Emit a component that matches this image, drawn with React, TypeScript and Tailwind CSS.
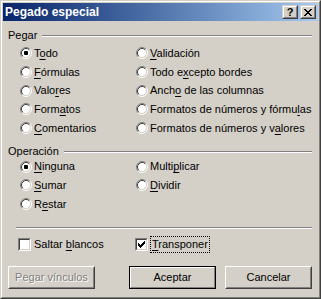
import * as React from 'react';

type Item = { text: string; at: number; checked?: boolean };

const Acc = ({ text, at }: { text: string; at: number }) => (
  <span className="whitespace-nowrap">
    {text.slice(0, at)}
    <span className="underline underline-offset-[2px]">{text[at]}</span>
    {text.slice(at + 1)}
  </span>
);

const Radio = ({ checked }: { checked?: boolean }) => (
  <svg width="12" height="12" viewBox="0 0 12 12" className="shrink-0">
    <circle cx="6" cy="6" r="4.5" fill="#fff" />
    <path d="M2.11 9.89A5.5 5.5 0 0 1 9.89 2.11" stroke="#808080" fill="none" />
    <path d="M9.89 2.11A5.5 5.5 0 0 1 2.11 9.89" stroke="#fff" fill="none" />
    <path d="M2.82 9.18A4.5 4.5 0 0 1 9.18 2.82" stroke="#404040" fill="none" />
    <path d="M9.18 2.82A4.5 4.5 0 0 1 2.82 9.18" stroke="#D4D0C8" fill="none" />
    {checked && <rect x="4" y="4" width="4" height="4" rx="1" fill="#000" />}
  </svg>
);

const Checkbox = ({ checked }: { checked?: boolean }) => (
  <div className="w-[13px] h-[13px] shrink-0 border border-t-[#808080] border-l-[#808080] border-r-white border-b-white">
    <div className="w-full h-full bg-white border border-t-[#404040] border-l-[#404040] border-r-[#D4D0C8] border-b-[#D4D0C8]">
      {checked && (
        <svg width="9" height="9" viewBox="0 0 9 9" className="block">
          <rect x="1" y="3" width="1" height="3" fill="#000" />
          <rect x="2" y="4" width="1" height="3" fill="#000" />
          <rect x="3" y="5" width="1" height="3" fill="#000" />
          <rect x="4" y="4" width="1" height="3" fill="#000" />
          <rect x="5" y="3" width="1" height="3" fill="#000" />
          <rect x="6" y="2" width="1" height="3" fill="#000" />
          <rect x="7" y="1" width="1" height="3" fill="#000" />
        </svg>
      )}
    </div>
  </div>
);

const RadioCol = ({ items, width }: { items: Item[]; width?: string }) => (
  <div className={`flex flex-col ${width ?? ''}`}>
    {items.map((it) => (
      <div key={it.text} className="flex h-[18.7px] items-center gap-[2px]">
        <Radio checked={it.checked} />
        <Acc text={it.text} at={it.at} />
      </div>
    ))}
  </div>
);

const GroupLabel = ({ text }: { text: string }) => (
  <div className="flex h-[13px] pl-[5px] pr-[6px]">
    <span className="leading-[13px]">{text}</span>
    <div className="ml-[5px] mt-[6px] h-[2px] flex-1 border-t border-t-[#808080] border-b border-b-white" />
  </div>
);

const Button = ({ label, isDefault, disabled }: { label: string; isDefault?: boolean; disabled?: boolean }) => (
  <div className={`w-[87px] h-[23px] ${isDefault ? 'border border-black' : ''}`}>
    <div
      className={`h-full border border-t-white border-l-white ${
        isDefault ? 'border-r-[#808080] border-b-[#808080]' : 'border-r-[#404040] border-b-[#404040]'
      }`}
    >
      <div
        className={`h-full flex items-center justify-center ${
          isDefault ? '' : 'border border-t-[#D4D0C8] border-l-[#D4D0C8] border-r-[#808080] border-b-[#808080]'
        } ${disabled ? 'text-[#808080] [text-shadow:1px_1px_0_#fff]' : 'text-black'}`}
      >
        {label}
      </div>
    </div>
  </div>
);

const CaptionButton = ({ children }: { children: React.ReactNode }) => (
  <div className="w-[16px] h-[14px] bg-[#D4D0C8] border border-t-[#D4D0C8] border-l-[#D4D0C8] border-r-[#404040] border-b-[#404040]">
    <div className="h-full border border-t-white border-l-white border-r-[#808080] border-b-[#808080] flex items-center justify-center">
      {children}
    </div>
  </div>
);

const pegarLeft: Item[] = [
  { text: 'Todo', at: 1, checked: true },
  { text: 'Fórmulas', at: 0 },
  { text: 'Valores', at: 4 },
  { text: 'Formatos', at: 4 },
  { text: 'Comentarios', at: 0 },
];

const pegarRight: Item[] = [
  { text: 'Validación', at: 0 },
  { text: 'Todo excepto bordes', at: 6 },
  { text: 'Ancho de las columnas', at: 4 },
  { text: 'Formatos de números y fórmulas', at: 27 },
  { text: 'Formatos de números y valores', at: 23 },
];

const opLeft: Item[] = [
  { text: 'Ninguna', at: 0, checked: true },
  { text: 'Sumar', at: 0 },
  { text: 'Restar', at: 1 },
];

const opRight: Item[] = [
  { text: 'Multiplicar', at: 5 },
  { text: 'Dividir', at: 0 },
];

export default function App() {
  return (
    <div className="w-[321px] h-[299px] bg-[#D4D0C8] font-['Liberation_Sans',Arial,sans-serif] text-[11px] leading-[13px] text-black border border-t-[#D4D0C8] border-l-[#D4D0C8] border-r-[#404040] border-b-[#404040]">
      <div className="h-full border border-t-white border-l-white border-r-[#808080] border-b-[#808080] p-[1px] flex flex-col">
        {/* title bar */}
        <div className="h-[18px] flex items-center bg-linear-to-r from-[#0A246A] to-[#A6CAF0] pl-[2px] pr-[2px]">
          <span className="flex-1 text-white font-bold text-[12px]">Pegado especial</span>
          <div className="flex gap-[2px]">
            <CaptionButton>
              <span className="font-bold text-[11px] leading-[10px]">?</span>
            </CaptionButton>
            <CaptionButton>
              <svg width="8" height="7" viewBox="0 0 8 7" className="block">
                <path d="M0 0h2v1H0zM6 0h2v1H6zM1 1h2v1H1zM5 1h2v1H5zM2 2h4v1H2zM3 3h2v1H3zM2 4h4v1H2zM1 5h2v1H1zM5 5h2v1H5zM0 6h2v1H0zM6 6h2v1H6z" fill="#000" />
              </svg>
            </CaptionButton>
          </div>
        </div>

        <div className="mt-[8px]">
          <GroupLabel text="Pegar" />
        </div>
        <div className="flex pl-[17px] mt-[2px]">
          <RadioCol items={pegarLeft} width="w-[116px]" />
          <RadioCol items={pegarRight} />
        </div>

        <div className="mt-[8px]">
          <GroupLabel text="Operación" />
        </div>
        <div className="flex pl-[17px] mt-[-1px]">
          <RadioCol items={opLeft} width="w-[116px]" />
          <RadioCol items={opRight} />
        </div>

        <div className="ml-[13px] mr-[6px] mt-[13px] h-[2px] border-t border-t-[#808080] border-b border-b-white" />

        <div className="flex items-center pl-[15px] mt-[7px] h-[17px]">
          <div className="flex items-center gap-[3px] w-[117px]">
            <Checkbox />
            <Acc text="Saltar blancos" at={7} />
          </div>
          <div className="flex items-center gap-[2px]">
            <Checkbox checked />
            <div className="border border-dotted border-black px-[1px] py-[1px]">
              <Acc text="Transponer" at={0} />
            </div>
          </div>
        </div>

        <div className="flex pl-[5px] mt-[13px]">
          <Button label="Pegar vínculos" disabled />
          <div className="ml-[34px]">
            <Button label="Aceptar" isDefault />
          </div>
          <div className="ml-[9px]">
            <Button label="Cancelar" />
          </div>
        </div>
      </div>
    </div>
  );
}
